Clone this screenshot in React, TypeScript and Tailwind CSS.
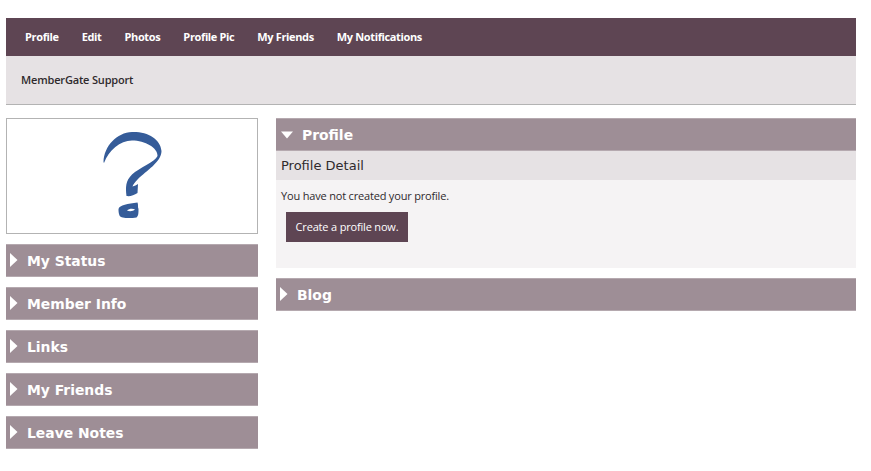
import React from 'react';

const navLinks = ['Profile', 'Edit', 'Photos', 'Profile Pic', 'My Friends', 'My Notifications'];
const sidePanels = ['My Status', 'Member Info', 'Links', 'My Friends', 'Leave Notes'];

function PanelHeader({ title, open = false }: { title: string; open?: boolean }) {
  return (
    <div className="h-[33px] flex items-center bg-[#9e8e96] border-t border-b border-t-[#b5a9af] border-b-[#b5a9af] pl-[4px]">
      {open ? (
        <svg width="12" height="8" viewBox="0 0 12 8" className="mr-[9px] ml-[1px]">
          <path d="M0 0.5 H12 L6 7.5 Z" fill="#fff" />
        </svg>
      ) : (
        <svg width="8" height="14" viewBox="0 0 8 14" className="mr-[9px] mb-[2px]">
          <path d="M0 0 L7.5 7 L0 14 Z" fill="#fff" />
        </svg>
      )}
      <span className="pt-[2px] font-['DejaVu_Sans'] font-bold text-[13.9px] text-white">{title}</span>
    </div>
  );
}

export default function App() {
  return (
    <div className="w-[871px] h-[471px] bg-white pt-[18px] pl-[6px] overflow-hidden font-['Open_Sans',sans-serif]">
      <div className="w-[850px]">
        <div className="h-[38px] bg-[#5e4553] flex items-center pl-[19px] gap-[23px] text-[11px] font-bold tracking-[-0.36px] text-white">
          {navLinks.map((link) => (
            <span key={link}>{link}</span>
          ))}
        </div>
        <div className="h-[49px] bg-[#e6e2e4] border-b border-[#b3b3b3] flex items-center pl-[15px] text-[11px] font-semibold tracking-[-0.17px] text-[#2f2a2d]">
          MemberGate Support
        </div>

        <div className="flex gap-[18px] mt-[13px]">
          <div className="w-[252px] flex flex-col gap-[10px]">
            <div className="h-[116px] border border-[#b3b3b3] bg-white flex justify-center items-center">
              <svg width="80" height="100" viewBox="2 1 80 100">
                <path
                  d="M13.5 37 C14 21 27 7.5 42 7 C58 6.5 70.5 14 71.5 26 C71.5 37 56 46 48 54 C45 57 43 60 42.5 61.5 C44.5 61 46.5 60 48 59 L47.5 68 C44 70.5 40 71.5 36.5 71 C35.5 62 35.5 56 42 49.5 C49 43 65 37 67.5 31 C68 23 55 15.5 42 15.5 C30 15.5 19 25 14 38 Z"
                  fill="#355c99"
                />
                <path
                  fillRule="evenodd"
                  d="M28.5 84 C29.5 80 38 78.5 47.5 77.5 C48.5 80 47.5 82 48.5 84 C48.5 88 48.5 91 46.5 92.5 C40 93.5 31 93.5 29.5 90.5 C28.5 88 28.5 86 28.5 84 Z M37 85.5 C39 83.5 43 83.5 45 84.5 C43 86.5 39 86.5 37 85.5 Z"
                  fill="#355c99"
                />
              </svg>
            </div>
            {sidePanels.map((panel) => (
              <PanelHeader key={panel} title={panel} />
            ))}
          </div>

          <div className="w-[580px]">
            <PanelHeader title="Profile" open />
            <div className="h-[29px] bg-[#e6e2e4] flex items-center pl-[5px] font-['DejaVu_Sans'] text-[13px] text-[#2f2a2d]">
              Profile Detail
            </div>
            <div className="h-[88px] bg-[#f5f3f4] pl-[5px] pt-[8px] text-[11px] tracking-[-0.18px] text-[#2f2a2d]">
              <p className="leading-[16px]">You have not created your profile.</p>
              <div className="mt-[8px] ml-[5px] w-[122px] h-[30px] bg-[#5e4553] flex items-center justify-center font-medium text-white">
                Create a profile now.
              </div>
            </div>
            <div className="mt-[10px]">
              <PanelHeader title="Blog" />
            </div>
          </div>
        </div>
      </div>
    </div>
  );
}
